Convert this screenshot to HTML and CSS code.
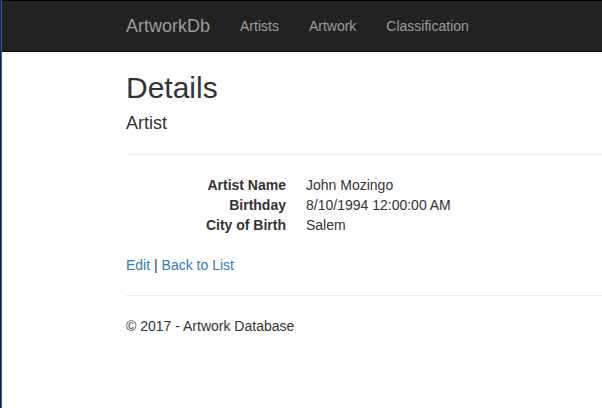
FILE: index.html
```html
<!DOCTYPE html>
<html>
<head>
<meta charset="utf-8">
<title>Details - ArtworkDb</title>
<link rel="stylesheet" href="styles.css">
</head>
<body>
<div class="page">
  <nav class="navbar">
    <div class="container nav-inner">
      <a class="brand" href="#">ArtworkDb</a>
      <ul class="nav">
        <li><a href="#">Artists</a></li>
        <li><a href="#">Artwork</a></li>
        <li><a href="#">Classification</a></li>
      </ul>
    </div>
  </nav>
  <div class="container body-content">
    <h2>Details</h2>
    <div>
      <h4>Artist</h4>
      <hr>
      <dl class="dl-horizontal">
        <dt>Artist Name</dt>
        <dd>John Mozingo</dd>
        <dt>Birthday</dt>
        <dd>8/10/1994 12:00:00 AM</dd>
        <dt>City of Birth</dt>
        <dd>Salem</dd>
      </dl>
    </div>
    <p><a href="#">Edit</a> | <a href="#">Back to List</a></p>
    <hr>
    <footer>
      <p>&copy; 2017 - Artwork Database</p>
    </footer>
  </div>
</div>
</body>
</html>
```
FILE: styles.css
```css
html, body {
  margin: 0;
  padding: 0;
  height: 100%;
  overflow: hidden;
}
body {
  background: #fff;
  font-family: "Liberation Sans", Arial, Helvetica, sans-serif;
  font-size: 14px;
  line-height: 1.42857143;
  color: #333;
  border-left: 1px solid #1b2540;
}
.page {
  border-left: 1px solid #3a5a9c;
  min-height: 100%;
  box-sizing: border-box;
}
a {
  color: #337ab7;
  text-decoration: none;
}
.container {
  padding-left: 124px;
  padding-right: 0;
}
.navbar {
  background: #222;
  border-top: 1px solid #050505;
  border-bottom: 1px solid #080808;
  height: 50px;
}
.nav-inner {
  display: flex;
  height: 50px;
}
.brand {
  font-size: 18px;
  line-height: 20px;
  padding: 15px 15px 15px 0;
  color: #9d9d9d;
}
.nav {
  display: flex;
  list-style: none;
  margin: 0;
  padding: 0;
}
.nav a {
  display: block;
  padding: 15px;
  line-height: 20px;
  color: #9d9d9d;
}
h2, h4 {
  font-family: inherit;
  font-weight: 500;
  line-height: 1.1;
  color: inherit;
}
h2 {
  font-size: 30px;
  margin: 19px 0 10px;
}
h4 {
  font-size: 18px;
  margin: 10px 0 10px;
}
hr {
  margin: 20px 0;
  border: 0;
  border-top: 1px solid #eee;
  height: 0;
}
dl {
  margin: 0 0 20px;
  display: grid;
  grid-template-columns: 160px 1fr;
  column-gap: 20px;
}
dt {
  font-weight: bold;
  text-align: right;
  line-height: 20px;
  white-space: nowrap;
}
dd {
  margin: 0;
  line-height: 20px;
}
p {
  margin: 0 0 10px;
}
```
